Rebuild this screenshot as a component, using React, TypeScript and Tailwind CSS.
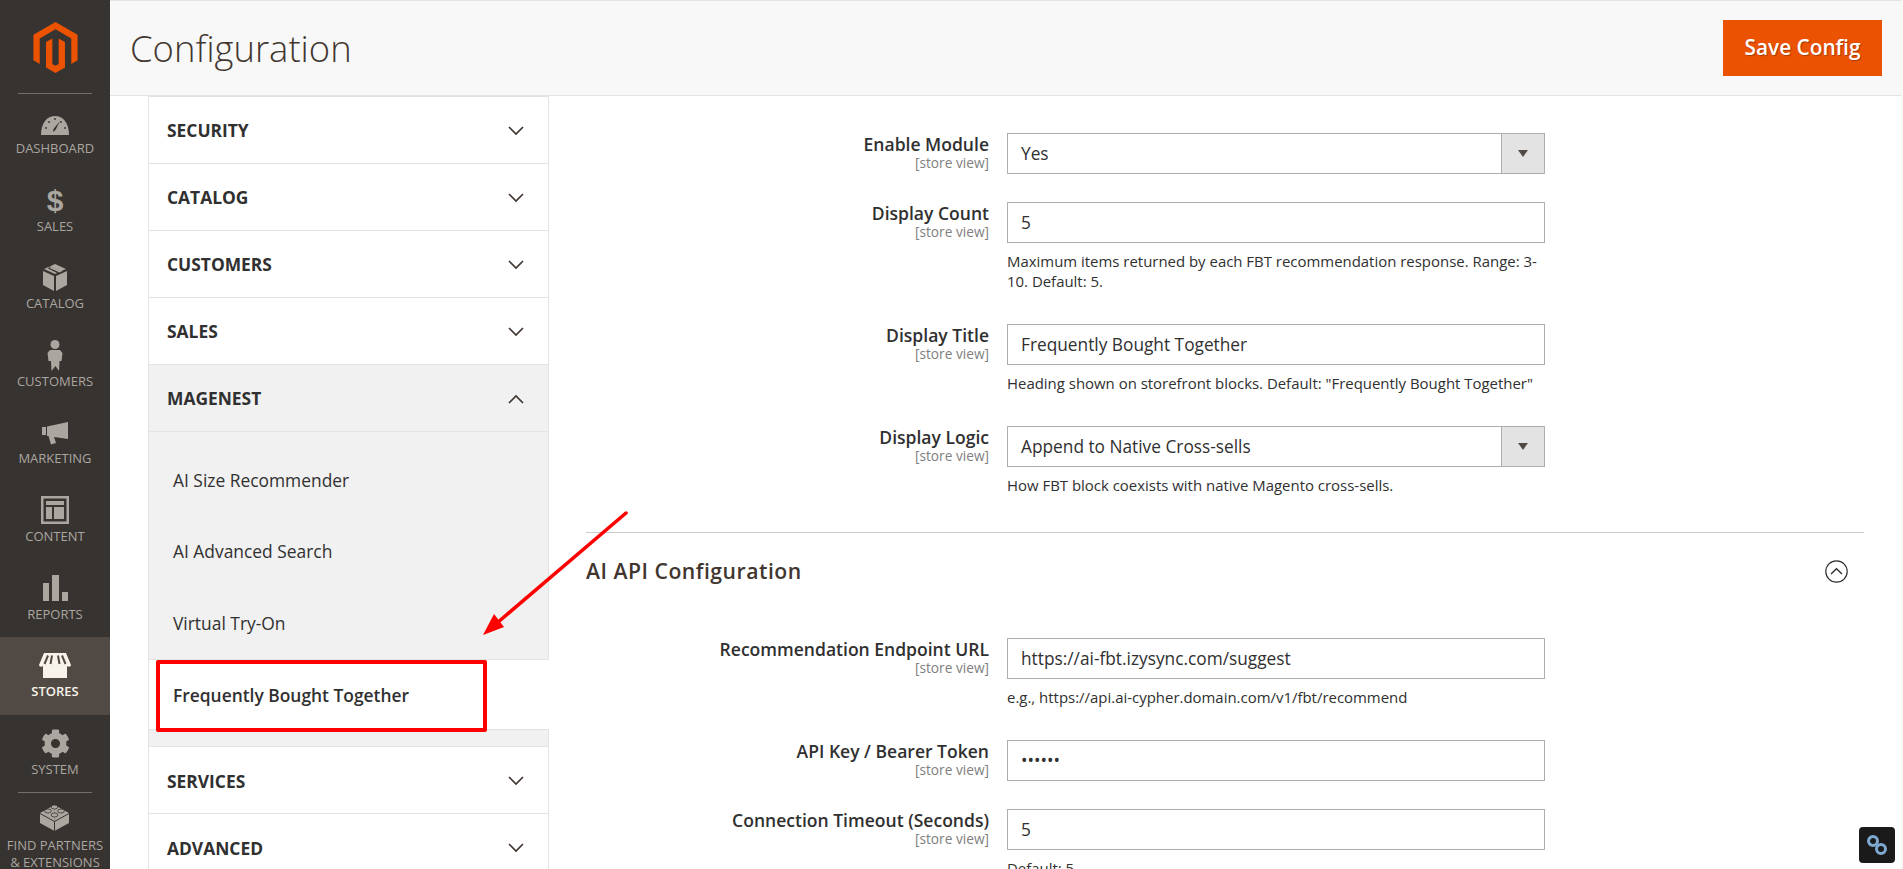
import React from "react";
import { SiMagento } from "react-icons/si";
import { FaCog } from "react-icons/fa";

const iconColor = "#aaa6a0";

const GaugeIcon = () => (
  <svg width="28" height="21" viewBox="0 0 28 21" className="translate-y-[3px]">
    <path d="M0 20 C0 8 6 1 14 1 C22 1 28 8 28 20 Z" fill={iconColor} />
    <g fill="#373330">
      <circle cx="5" cy="13" r="0.9" />
      <circle cx="8" cy="7" r="0.9" />
      <circle cx="14" cy="4" r="0.9" />
      <circle cx="20" cy="7" r="0.9" />
      <circle cx="24" cy="13" r="0.9" />
    </g>
    <path d="M19 6 L14.5 15 L12 17 L12.5 14 Z" fill="#373330" />
  </svg>
);

const BoxIcon = () => (
  <svg width="24" height="27" viewBox="0 0 24 27">
    <path d="M12 0 L23 5 L12 10 L1 5 Z" fill={iconColor} />
    <path d="M7 2.2 L18 7.4 L18 9 L16 10 L5 4.6 Z" fill="#373330" />
    <path d="M8.5 2.8 L19 7.5 L16.5 8.6 L6 3.8 Z" fill={iconColor} />
    <path d="M0 7 L11 12 L11 27 L0 21 Z" fill={iconColor} />
    <path d="M24 7 L13 12 L13 27 L24 21 Z" fill={iconColor} />
  </svg>
);

const PersonIcon = () => (
  <svg width="16" height="31" viewBox="0 0 16 31">
    <circle cx="8" cy="4.5" r="4.5" fill={iconColor} />
    <path d="M3 10 H13 L15.5 13 L14.5 21 L12.5 21 L12 31 L8.5 26 L4.5 31 L4 21 L1.5 21 L0.5 13 Z" fill={iconColor} />
  </svg>
);

const MegaphoneIcon = () => (
  <svg width="26" height="23" viewBox="0 0 26 23" className="translate-y-[1px]">
    <rect x="0" y="5" width="4" height="8" fill={iconColor} />
    <path d="M5 4.5 L26 0 V17 L12 15 L14 21 L9 22.5 L6.5 14 H5 Z" fill={iconColor} />
  </svg>
);

const ContentIcon = () => (
  <svg width="28" height="28" viewBox="0 0 28 28">
    <path fillRule="evenodd" d="M0 0 H28 V28 H0 Z M2.5 2.5 V25.5 H25.5 V2.5 Z" fill={iconColor} />
    <rect x="5" y="5" width="18" height="4" fill={iconColor} />
    <rect x="5" y="11" width="6" height="12" fill={iconColor} />
    <rect x="13" y="11" width="10" height="12" fill={iconColor} />
  </svg>
);

const BarsIcon = () => (
  <svg width="25" height="26" viewBox="0 0 25 26">
    <rect x="0" y="8" width="6" height="18" fill={iconColor} />
    <rect x="9" y="0" width="7" height="26" fill={iconColor} />
    <rect x="19" y="17" width="6" height="9" fill={iconColor} />
  </svg>
);

const StoreIcon = () => (
  <svg width="32" height="25" viewBox="0 0 32 25">
    <path d="M5 0 H27 L32 12 C32 14 29 14 28 13 V25 H4 V13 C3 14 0 14 0 12 Z" fill="#f7f3eb" />
    <path d="M9 2.5 L5.5 11 M13 2.5 L11.5 11 M19 2.5 L20.5 11 M23 2.5 L26.5 11" stroke="#514943" strokeWidth="2" />
  </svg>
);

const BrickIcon = () => (
  <svg width="29" height="29" viewBox="0 0 29 29">
    <path d="M14.5 2 L29 10 V20 L14.5 28 Z" fill={iconColor} />
    <path d="M14.5 2 L0 10 V20 L14.5 28 Z" fill={iconColor} />
    <path d="M0 10.5 L14.5 18.5 L29 10.5" stroke="#373330" strokeWidth="1" fill="none" />
    <path d="M14.5 18.5 V28" stroke="#373330" strokeWidth="1" />
    <g fill={iconColor} stroke="#373330" strokeWidth="0.8">
      <ellipse cx="14.5" cy="4" rx="3.4" ry="2" />
      <ellipse cx="8" cy="8" rx="3.4" ry="2" />
      <ellipse cx="21" cy="8" rx="3.4" ry="2" />
      <ellipse cx="14.5" cy="12" rx="3.4" ry="2" />
    </g>
  </svg>
);

const Chevron = ({ up = false }: { up?: boolean }) => (
  <svg width="16" height="10" viewBox="0 0 16 10" fill="none" stroke="#41362f" strokeWidth="1.7">
    <path d={up ? "M1 9 L8 2 L15 9" : "M1 1 L8 8 L15 1"} />
  </svg>
);

const navItems = [
  { label: "DASHBOARD", icon: <GaugeIcon /> },
  { label: "SALES", icon: <span className="font-['Liberation_Sans',sans-serif] font-bold text-[30px] leading-[31px] text-[#aaa6a0]">$</span> },
  { label: "CATALOG", icon: <BoxIcon /> },
  { label: "CUSTOMERS", icon: <PersonIcon /> },
  { label: "MARKETING", icon: <MegaphoneIcon /> },
  { label: "CONTENT", icon: <ContentIcon /> },
  { label: "REPORTS", icon: <BarsIcon /> },
  { label: "STORES", icon: <StoreIcon />, active: true },
  { label: "SYSTEM", icon: <FaCog size={29} color={iconColor} /> },
];

const Sidebar = () => (
  <aside className="w-[110px] shrink-0 bg-[#373330] h-[869px] overflow-hidden flex flex-col items-center">
    <div className="h-[93px] w-full shrink-0 flex items-center justify-center pt-[1px]">
      <SiMagento size={51} color="#eb5202" />
    </div>
    <div className="w-[74px] h-px bg-[#736e69] shrink-0" />
    {navItems.map((item) => (
      <div
        key={item.label}
        className={
          item.active
            ? "w-full h-[77.6px] shrink-0 bg-[#514943] flex flex-col items-center pt-[13px]"
            : "w-full h-[77.6px] shrink-0 flex flex-col items-center pt-[13px]"
        }
      >
        <div className="h-[31px] flex items-center justify-center">{item.icon}</div>
        <div
          className={
            item.active
              ? "text-[13px] leading-[16px] mt-[2px] font-semibold text-[#f7f3eb]"
              : "text-[13px] leading-[16px] mt-[2px] text-[#aaa6a0]"
          }
        >
          {item.label}
        </div>
      </div>
    ))}
    <div className="w-[74px] h-px bg-[#736e69] shrink-0" />
    <div className="pt-[10px] flex flex-col items-center shrink-0">
      <BrickIcon />
      <div className="text-[13px] leading-[17px] mt-[5px] text-[#aaa6a0] text-center whitespace-nowrap">
        FIND PARTNERS
        <br />& EXTENSIONS
      </div>
    </div>
  </aside>
);

const MenuRow = ({ label, up = false, shaded = false }: { label: string; up?: boolean; shaded?: boolean }) => (
  <div
    className={
      shaded
        ? "h-[67px] shrink-0 bg-[#f1f1f1] border-b border-[#e3e3e3] flex items-center justify-between pt-[1px] pl-[18px] pr-[24px]"
        : "h-[67px] shrink-0 border-b border-[#e3e3e3] flex items-center justify-between pt-[1px] pl-[18px] pr-[24px]"
    }
  >
    <span className="text-[17.4px] font-bold text-[#303030]">{label}</span>
    <Chevron up={up} />
  </div>
);

const SubItem = ({ label }: { label: string }) => (
  <div className="h-[71.3px] flex items-center pl-[24px] text-[17.4px] text-[#303030]">{label}</div>
);

const ConfigMenu = () => (
  <div className="w-[401px] ml-[38px] shrink-0 border-x border-t border-[#e3e3e3] flex flex-col">
    <MenuRow label="SECURITY" />
    <MenuRow label="CATALOG" />
    <MenuRow label="CUSTOMERS" />
    <MenuRow label="SALES" />
    <MenuRow label="MAGENEST" up shaded />
    <div className="bg-[#f1f1f1] border-b border-[#e3e3e3] pt-[12.5px] pb-[16px]">
      <SubItem label="AI Size Recommender" />
      <SubItem label="AI Advanced Search" />
      <SubItem label="Virtual Try-On" />
      <div className="h-[71px] mt-[1px] pt-[1px] bg-white border-y border-[#e3e3e3] -mr-px flex items-center pl-[24px] text-[17.4px] font-semibold text-[#303030]">
        Frequently Bought Together
      </div>
    </div>
    <MenuRow label="SERVICES" />
    <MenuRow label="ADVANCED" />
  </div>
);

const Field = ({ value, select = false }: { value: string; select?: boolean }) => (
  <div className="h-[41px] border border-[#adadad] bg-white flex items-center justify-between text-[17.3px] text-[#303030]">
    <span className="pl-[13px]">{value}</span>
    {select && (
      <span className="w-[43px] h-full bg-[#e3e3e3] border-l border-[#adadad] flex items-center justify-center">
        <span className="w-0 h-0 border-x-[5px] border-x-transparent border-t-[7px] border-t-[#514943]" />
      </span>
    )}
  </div>
);

type RowProps = {
  label: string;
  value: string;
  select?: boolean;
  note?: React.ReactNode;
  className?: string;
};

const FormRow = ({ label, value, select, note, className }: RowProps) => (
  <div className={"flex " + (className ?? "")}>
    <div className="w-[403px] shrink-0 text-right pt-[1px]">
      <div className="text-[17.55px] leading-[20px] font-semibold text-[#303030]">{label}</div>
      <div className="text-[13.7px] leading-[16px] mt-[1px] text-[#808080]">[store view]</div>
    </div>
    <div className="w-[538px] ml-[18px] shrink-0">
      <Field value={value} select={select} />
      {note && <div className="mt-[8px] text-[14.95px] leading-[20px] text-[#303030]">{note}</div>}
    </div>
  </div>
);

const ConfigForm = () => (
  <div className="ml-[37px] w-[1278px] shrink-0 pt-[37px]">
    <FormRow label="Enable Module" value="Yes" select className="mb-[28px]" />
    <FormRow
      label="Display Count"
      value="5"
      className="mb-[33px]"
      note={
        <>
          Maximum items returned by each FBT recommendation response. Range: 3-
          <br />
          10. Default: 5.
        </>
      }
    />
    <FormRow
      label="Display Title"
      value="Frequently Bought Together"
      className="mb-[33px]"
      note={'Heading shown on storefront blocks. Default: "Frequently Bought Together"'}
    />
    <FormRow
      label="Display Logic"
      value="Append to Native Cross-sells"
      select
      note="How FBT block coexists with native Magento cross-sells."
    />
    <div className="mt-[37px] border-t border-[#cccccc] h-[106px] pt-[20px] flex justify-between items-start">
      <h2 className="text-[21.2px] leading-[36px] font-semibold tracking-[0.5px] text-[#41362f]">AI API Configuration</h2>
      <svg width="23" height="23" viewBox="0 0 23 23" fill="none" stroke="#303030" className="mt-[7px] mr-[16px]">
        <circle cx="11.5" cy="11.5" r="10.7" strokeWidth="1.2" />
        <path d="M6 14 L11.5 8.8 L17 14" strokeWidth="1.4" />
      </svg>
    </div>
    <FormRow
      label="Recommendation Endpoint URL"
      value="https://ai-fbt.izysync.com/suggest"
      className="mb-[33px]"
      note="e.g., https://api.ai-cypher.domain.com/v1/fbt/recommend"
    />
    <FormRow label="API Key / Bearer Token" value="••••••" className="mb-[28px]" />
    <FormRow label="Connection Timeout (Seconds)" value="5" note="Default: 5" />
  </div>
);

export default function App() {
  return (
    <div className="relative w-[1903px] h-[869px] overflow-hidden bg-white flex font-['Open_Sans',sans-serif]">
      <Sidebar />
      <div className="w-[1791px] shrink-0 flex flex-col">
        <header className="h-[96px] shrink-0 bg-[#f8f8f8] border-y border-[#e3e3e3] flex items-center justify-between pl-[20px] pr-[19px]">
          <h1 className="text-[36.4px] font-light text-[#41362f]">Configuration</h1>
          <button className="w-[159px] h-[56px] bg-[#eb5202] text-white text-[20.8px] font-semibold [text-shadow:1px_1px_1px_rgba(0,0,0,0.3)]">
            Save Config
          </button>
        </header>
        <div className="flex overflow-hidden">
          <ConfigMenu />
          <ConfigForm />
        </div>
      </div>
      <div className="w-[2px] bg-[#f8f8f8] shrink-0" />

      {/* Screenshot annotation */}
      <div className="absolute left-[156px] top-[660px] w-[331px] h-[72px] border-[4px] border-[#fe0000] rounded-[2px]" />
      <svg className="absolute left-0 top-0 pointer-events-none" width="1903" height="869">
        <path d="M626 513 L497 623" stroke="#fe0000" strokeWidth="3.5" strokeLinecap="round" />
        <path d="M483 635 L494 614 L504 627 Z" fill="#fe0000" />
      </svg>

      {/* Floating widget */}
      <div className="absolute left-[1859px] top-[827px] w-[36px] h-[36px] rounded-[4px] bg-[#1a1a1a] flex items-center justify-center">
        <svg width="24" height="24" viewBox="0 0 24 24" fill="none" stroke="#7ea9cf" strokeWidth="3">
          <circle cx="8" cy="8" r="4.5" />
          <circle cx="16" cy="16" r="4.5" />
        </svg>
      </div>
    </div>
  );
}
